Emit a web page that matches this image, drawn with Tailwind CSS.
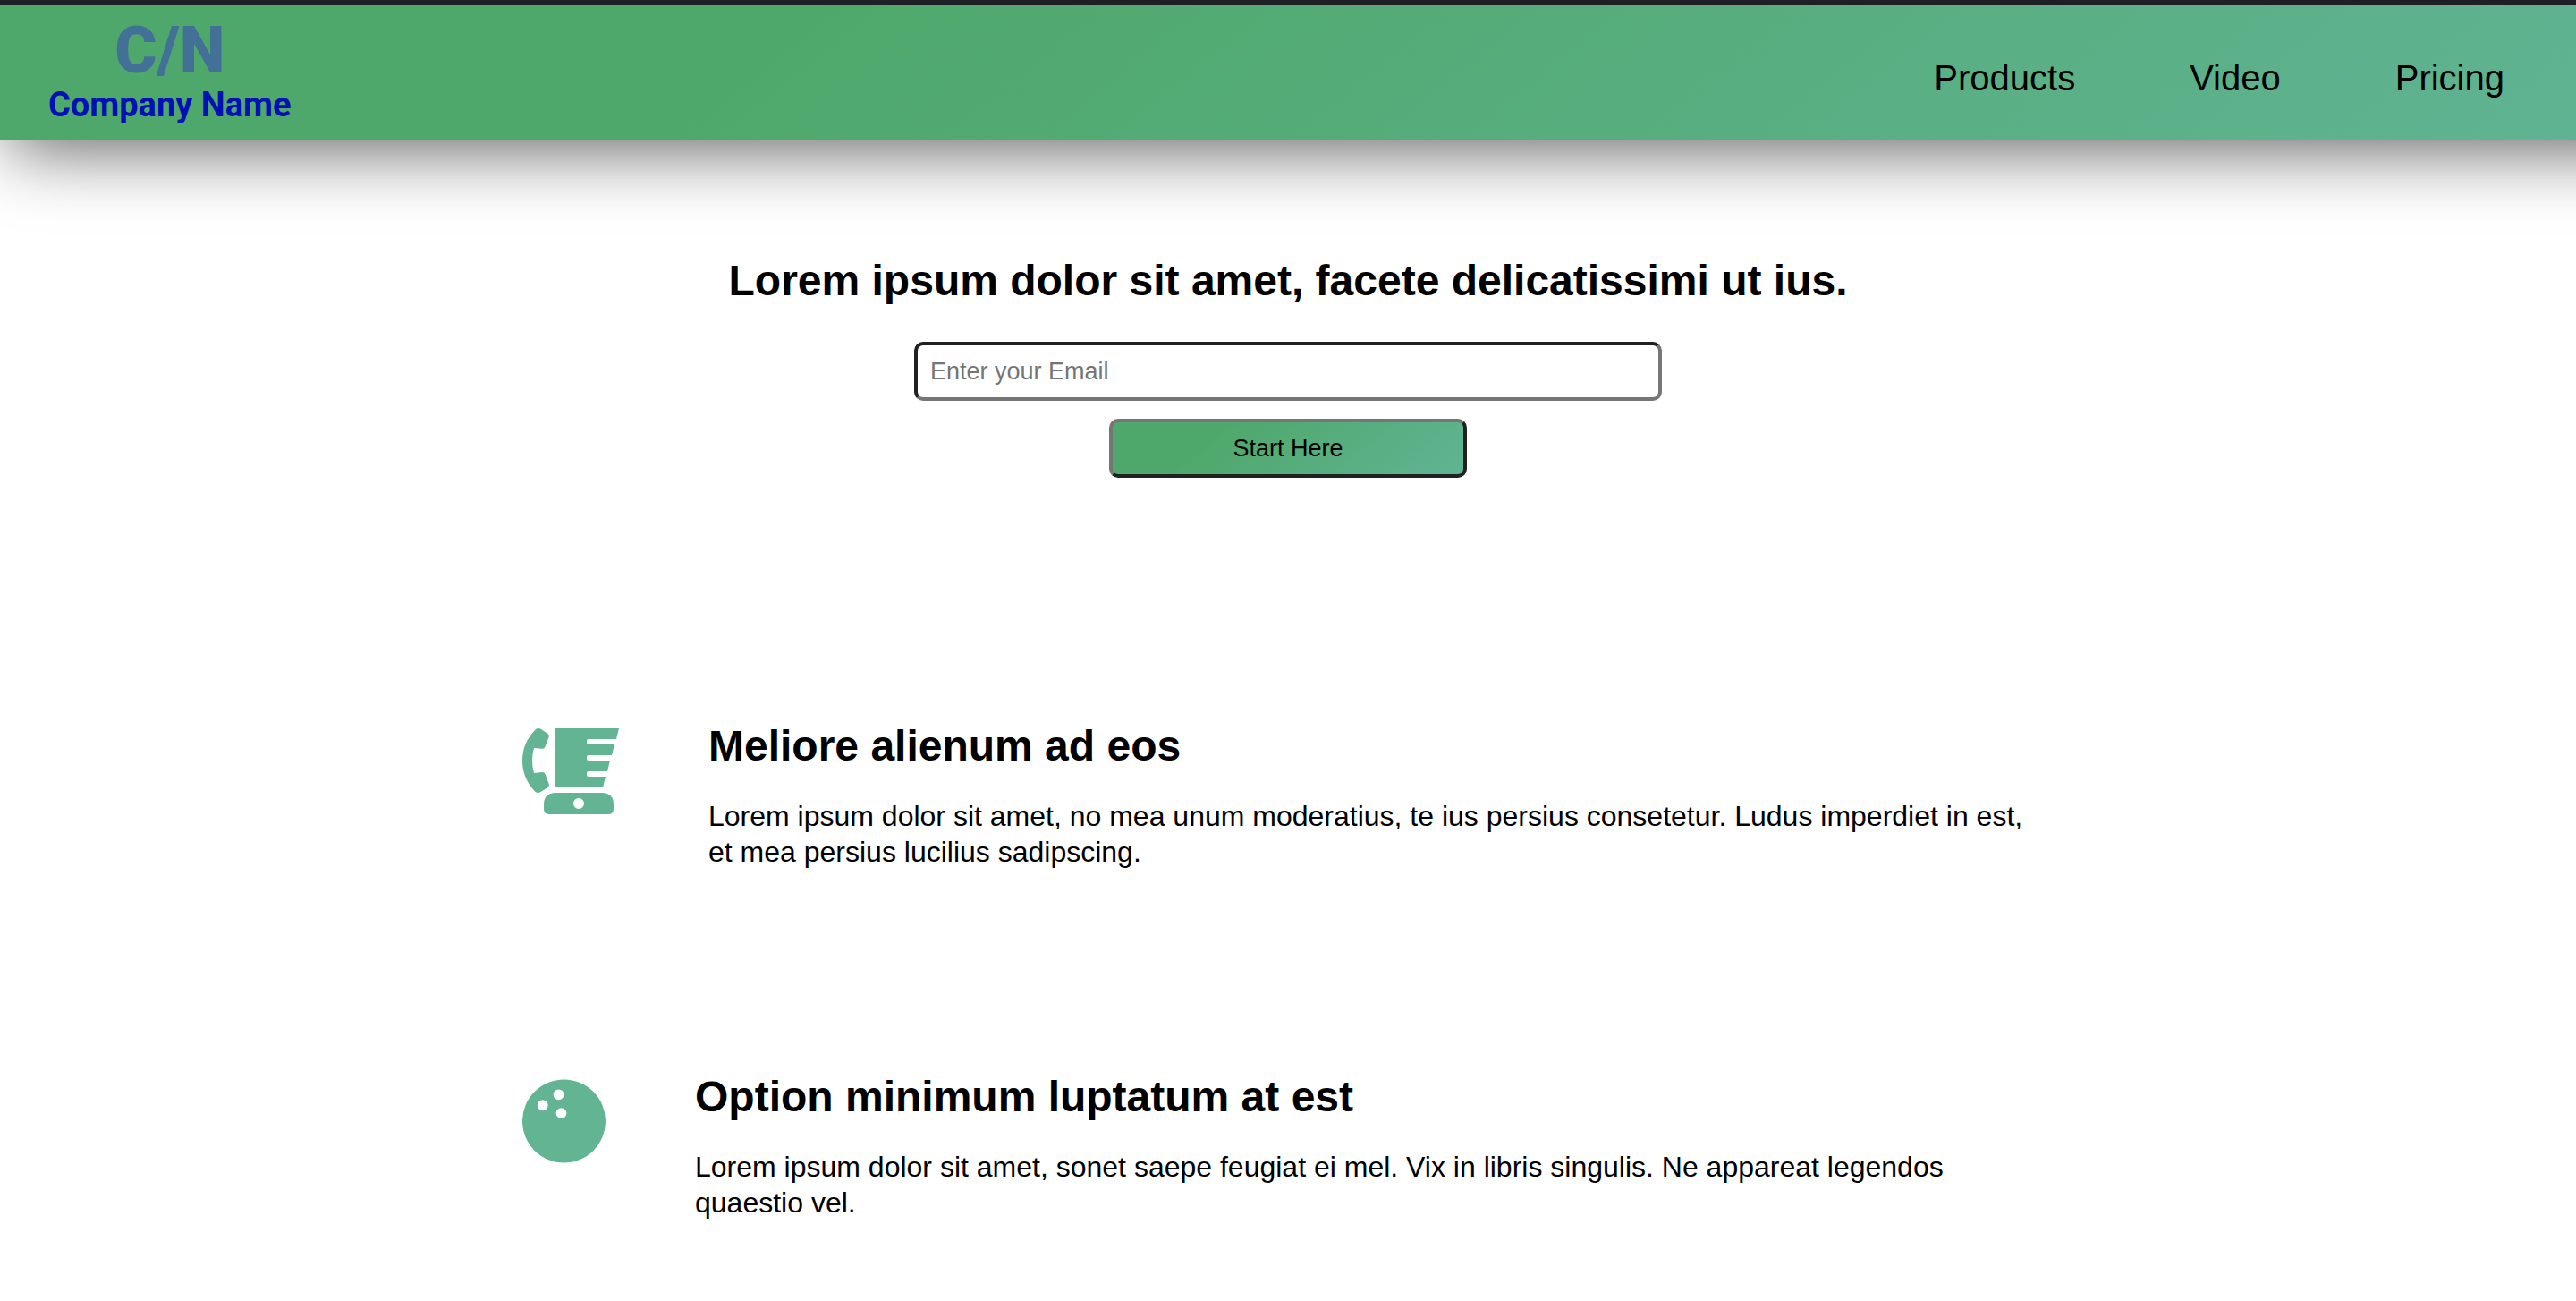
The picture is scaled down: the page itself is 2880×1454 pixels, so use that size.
<!DOCTYPE html>
<html lang="en">
<head>
<meta charset="utf-8">
<meta name="viewport" content="width=device-width, initial-scale=1">
<title>Company Name</title>
<script src="https://cdn.jsdelivr.net/npm/@tailwindcss/browser@4"></script>
</head>
<body class="min-h-screen overflow-x-hidden border-t-6 border-[#1f2026] bg-white font-['Liberation_Sans',Arial,sans-serif] text-black">
  <!-- The header runs past the right edge so its shadow fades only on the left -->
  <header class="-mr-30 flex h-[150px] items-center justify-between bg-[linear-gradient(141deg,#4fa86b_29%,#60b392_96%)] pr-50 pl-[54px] shadow-[10px_10px_80px_rgba(0,0,0,0.63)]">
    <a href="#" class="flex flex-col items-center pb-2 font-['Roboto',sans-serif]">
      <span class="text-[72px] leading-[80px] font-black text-[#437096]">C/N</span>
      <span class="text-[38px] leading-10 font-bold text-[#0010b5]">Company Name</span>
    </a>
    <nav class="flex gap-32 pt-3 text-[40px] leading-[48px]">
      <a href="#products">Products</a>
      <a href="#video">Video</a>
      <a href="#pricing">Pricing</a>
    </nav>
  </header>

  <main>
    <section class="flex flex-col items-center pt-[130px]">
      <h1 class="text-center text-[48px] leading-[56px] font-bold">Lorem ipsum dolor sit amet, facete delicatissimi ut ius.</h1>
      <form class="mt-10 flex w-[836px] max-w-full flex-col items-center gap-5">
        <input type="email" aria-label="Email" placeholder="Enter your Email" class="h-[66px] w-full rounded-[10px] border-4 border-t-[#212121] border-r-[#767676] border-b-[#767676] border-l-[#212121] bg-white px-[14px] text-[27px] leading-8 placeholder:text-[#757575]">
        <button type="button" class="h-[66px] w-[400px] rounded-[10px] border-4 border-t-[#767676] border-r-[#212121] border-b-[#212121] border-l-[#767676] bg-[linear-gradient(141deg,#4fa86b_29%,#60b392_96%)] text-[27px] leading-8">Start Here</button>
      </form>
    </section>

    <section id="products" class="mx-[20%] mt-[272px] flex flex-col gap-[226px] px-2">
      <article class="flex items-start gap-[100px]">
        <svg class="mt-2 h-24 w-[108px] shrink-0 fill-[#62b492]" viewBox="0 0 108 96" aria-hidden="true">
          <path d="M15 1Q18-1 21 1L28.500 6Q30.500 7.500 29.500 10L25.500 20.500Q24.500 23 22 22.800L13 22Q9 36 13 50L22 49Q24.500 48.800 25.500 51L29.700 62Q30.500 64.500 28.500 66L20.500 71Q17.500 73 14.500 71Q0 56 0 36T15 1Z"/>
          <path d="M36 0H108L105 12H74Q72 12 72 14V16Q72 18 74 18H103L100 30H74Q72 30 72 32V34Q72 36 74 36H98L95 48H74Q72 48 72 50V52Q72 54 74 54H93L90 66H36Z"/>
          <path fill-rule="evenodd" d="M36 72H90Q102 73 102 85V90Q102 96 96 96H30Q24 96 24 90V85Q24 73 36 72ZM63 78A6 6 0 1 0 63 90A6 6 0 1 0 63 78Z"/>
        </svg>
        <div>
          <h2 class="text-[48px] leading-[56px] font-bold">Meliore alienum ad eos</h2>
          <p class="mt-[30px] text-[32px] leading-10">Lorem ipsum dolor sit amet, no mea unum moderatius, te ius persius consetetur. Ludus imperdiet in est, et mea persius lucilius sadipscing.</p>
        </div>
      </article>
      <article class="flex items-start gap-[100px]">
        <svg class="mt-2 h-[94px] w-[93px] shrink-0 fill-[#62b492]" viewBox="0 0 94 94" aria-hidden="true">
          <path fill-rule="evenodd" d="M47 0A47 47 0 1 0 47 94A47 47 0 1 0 47 0ZM41 11A6 6 0 1 0 41 23A6 6 0 1 0 41 11ZM23 23A6 6 0 1 0 23 35A6 6 0 1 0 23 23ZM44 32A6 6 0 1 0 44 44A6 6 0 1 0 44 32Z"/>
        </svg>
        <div>
          <h2 class="text-[48px] leading-[56px] font-bold">Option minimum luptatum at est</h2>
          <p class="mt-[30px] text-[32px] leading-10">Lorem ipsum dolor sit amet, sonet saepe feugiat ei mel. Vix in libris singulis. Ne appareat legendos quaestio vel.</p>
        </div>
      </article>
    </section>
  </main>
</body>
</html>
